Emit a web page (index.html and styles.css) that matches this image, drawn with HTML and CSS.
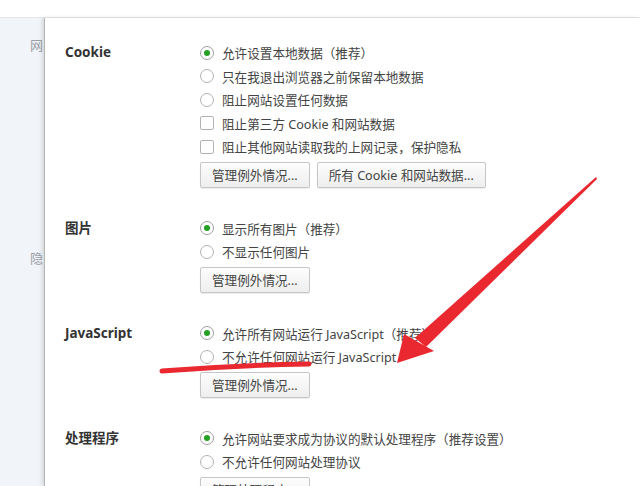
FILE: index.html
```html
<!DOCTYPE html>
<html lang="zh-CN">
	<head>
		<meta charset="UTF-8" />
		<meta name="viewport" content="width=device-width, initial-scale=1.0" />
		<title>内容设置</title>
		<link rel="stylesheet" href="styles.css">
	</head>
	<body>
		<div class="top-bar"></div>
		<div class="main">
			<aside class="sidebar">
				<div class="side-item">网</div>
				<div class="side-item side-privacy">隐</div>
			</aside>
			<section class="dialog">
				<div class="setting">
					<div class="setting-title">Cookie</div>
					<div class="setting-body">
						<label class="option"><span class="radio checked"></span>允许设置本地数据（推荐）</label>
						<label class="option"><span class="radio"></span>只在我退出浏览器之前保留本地数据</label>
						<label class="option"><span class="radio"></span>阻止网站设置任何数据</label>
						<label class="option"><span class="checkbox"></span>阻止第三方 Cookie 和网站数据</label>
						<label class="option"><span class="checkbox"></span>阻止其他网站读取我的上网记录，保护隐私</label>
						<div class="buttons">
							<button class="btn">管理例外情况...</button>
							<button class="btn">所有 Cookie 和网站数据...</button>
						</div>
					</div>
				</div>
				<div class="setting">
					<div class="setting-title">图片</div>
					<div class="setting-body">
						<label class="option"><span class="radio checked"></span>显示所有图片（推荐）</label>
						<label class="option"><span class="radio"></span>不显示任何图片</label>
						<div class="buttons">
							<button class="btn">管理例外情况...</button>
						</div>
					</div>
				</div>
				<div class="setting">
					<div class="setting-title">JavaScript</div>
					<div class="setting-body">
						<label class="option"><span class="radio checked"></span>允许所有网站运行 JavaScript（推荐）</label>
						<label class="option"><span class="radio"></span>不允许任何网站运行 JavaScript</label>
						<div class="buttons">
							<button class="btn">管理例外情况...</button>
						</div>
					</div>
				</div>
				<div class="setting">
					<div class="setting-title">处理程序</div>
					<div class="setting-body">
						<label class="option"><span class="radio checked"></span>允许网站要求成为协议的默认处理程序（推荐设置）</label>
						<label class="option"><span class="radio"></span>不允许任何网站处理协议</label>
						<div class="buttons">
							<button class="btn">管理处理程序...</button>
						</div>
					</div>
				</div>
			</section>
		</div>
		<!-- hand-drawn red marks over the screenshot -->
		<svg class="marks" width="640" height="486" viewBox="0 0 640 486" aria-hidden="true">
			<path d="M162 371 C 200 368, 250 365, 309 364" fill="none" stroke="#ea2830" stroke-width="5" stroke-linecap="round" />
			<polygon points="596,177 597,179 426,347 415,338" fill="#ea2830" />
			<polygon points="397,363 404,334 434,351" fill="#ea2830" />
		</svg>
	</body>
</html>
```

FILE: styles.css
```css
body {
	margin: 0;
	background: #fff;
	font-family: "Noto Sans", "Noto Sans CJK SC", sans-serif;
	font-size: 12.6px;
	color: #444;
	overflow: hidden;
}
.top-bar {
	height: 17px;
	border-bottom: 1px solid #e4e6e9;
}
.main {
	display: flex;
	height: 468px;
}
.sidebar {
	width: 44px;
	flex: none;
	background: #f1f4f8;
	overflow: hidden;
	white-space: nowrap;
	padding-top: 18px;
	box-sizing: border-box;
}
.side-item {
	padding-left: 30px;
	color: #9a9fa6;
	font-size: 13px;
	line-height: 18px;
}
.side-privacy {
	margin-top: 195px;
}
.dialog {
	flex: 1;
	background: #fff;
	border-left: 1px solid #b4b4b4;
	box-shadow: -2px 0 4px rgba(0, 0, 0, 0.12);
	padding: 23px 0 0 20px;
	position: relative;
	z-index: 1;
}
.setting {
	display: grid;
	grid-template-columns: 135px 1fr;
	margin-bottom: 29px;
}
.setting-title {
	font-weight: bold;
	font-size: 13.5px;
	color: #333;
	line-height: 23.5px;
}
.option {
	display: flex;
	align-items: center;
	height: 23.5px;
	gap: 8px;
	white-space: nowrap;
}
.radio,
.checkbox {
	width: 12px;
	height: 12px;
	border: 1px solid #b3b3b3;
	background: #fff;
	flex: none;
	display: flex;
	align-items: center;
	justify-content: center;
}
.radio {
	border-radius: 50%;
}
.checkbox {
	border-radius: 2px;
}
.radio.checked {
	border-color: #a0a0a0;
}
.radio.checked::after {
	content: "";
	width: 6px;
	height: 6px;
	border-radius: 50%;
	background: #24a024;
}
.buttons {
	display: flex;
	gap: 7px;
	margin-top: 3px;
}
.btn {
	height: 26px;
	padding: 0 11px;
	font: inherit;
	color: #444;
	background: linear-gradient(#fdfdfd, #eeeeee);
	border: 1px solid #c6c6c6;
	border-radius: 2px;
	box-shadow: 0 1px 1px rgba(0, 0, 0, 0.08);
}
.marks {
	position: absolute;
	left: 0;
	top: 0;
	z-index: 2;
	pointer-events: none;
}
```
